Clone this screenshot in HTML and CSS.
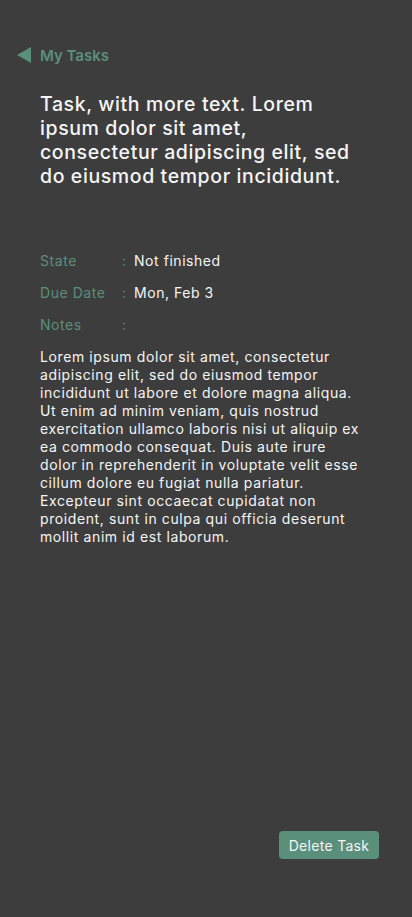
FILE: index.html
```html
<!DOCTYPE html>
<html>
<head>
<meta charset="utf-8">
<link rel="stylesheet" href="styles.css">
</head>
<body>
<div class="page">
  <a class="back" href="#">
    <svg class="back-icon" width="16" height="18" viewBox="0 0 16 18"><polygon points="15,1 15,17 1,9" fill="#5a8f7b"/></svg>
    <span>My Tasks</span>
  </a>
  <h1 class="title">Task, with more text. Lorem ipsum dolor sit amet, consectetur adipiscing elit, sed do eiusmod tempor incididunt.</h1>
  <div class="props">
    <div class="row"><span class="label">State</span><span class="colon">:</span><span class="value">Not finished</span></div>
    <div class="row"><span class="label">Due Date</span><span class="colon">:</span><span class="value">Mon, Feb 3</span></div>
    <div class="row"><span class="label">Notes</span><span class="colon">:</span><span class="value"></span></div>
  </div>
  <p class="notes">Lorem ipsum dolor sit amet, consectetur adipiscing elit, sed do eiusmod tempor incididunt ut labore et dolore magna aliqua. Ut enim ad minim veniam, quis nostrud exercitation ullamco laboris nisi ut aliquip ex ea commodo consequat. Duis aute irure dolor in reprehenderit in voluptate velit esse cillum dolore eu fugiat nulla pariatur. Excepteur sint occaecat cupidatat non proident, sunt in culpa qui officia deserunt mollit anim id est laborum.</p>
  <div class="actions">
    <button class="delete">Delete Task</button>
  </div>
</div>
</body>
</html>
```
FILE: styles.css
```css
* { box-sizing: border-box; }
html, body {
  margin: 0;
  padding: 0;
  background: #3d3d3d;
  font-family: Inter, "Noto Sans", sans-serif;
  color: #f2f2f2;
}
.page {
  height: 917px;
  display: flex;
  flex-direction: column;
  padding: 44px 33px 58px 40px;
}
.back {
  display: flex;
  align-items: center;
  gap: 8px;
  margin-left: -24px;
  height: 22px;
  color: #5a8f7b;
  text-decoration: none;
  font-size: 15px;
  font-weight: 600;
}
.back-icon { display: block; }
.title {
  margin: 26px 0 0 0;
  font-size: 19.5px;
  line-height: 24px;
  font-weight: 500;
  letter-spacing: 0.6px;
  color: #f5f5f5;
  padding-right: 24px;
}
.props {
  margin-top: 63px;
  display: flex;
  flex-direction: column;
  gap: 12px;
}
.row {
  display: flex;
  font-size: 14px;
  line-height: 20px;
  letter-spacing: 0.55px;
}
.label {
  width: 82px;
  color: #5a8f7b;
}
.colon {
  width: 12px;
  color: #5a8f7b;
}
.value {
  color: #f5f5f5;
  font-weight: 400;
}
.notes {
  margin: 13px 0 0 0;
  font-size: 14px;
  line-height: 18px;
  font-weight: 400;
  letter-spacing: 0.6px;
  color: #f5f5f5;
  padding-right: 19px;
}
.actions {
  margin-top: auto;
  display: flex;
  justify-content: flex-end;
}
.delete {
  background: #5a8f7b;
  color: #f5f5f5;
  border: none;
  border-radius: 4px;
  height: 28px;
  width: 100px;
  font-family: Inter, sans-serif;
  font-size: 14px;
  letter-spacing: 0.3px;
  padding: 0;
}
```
